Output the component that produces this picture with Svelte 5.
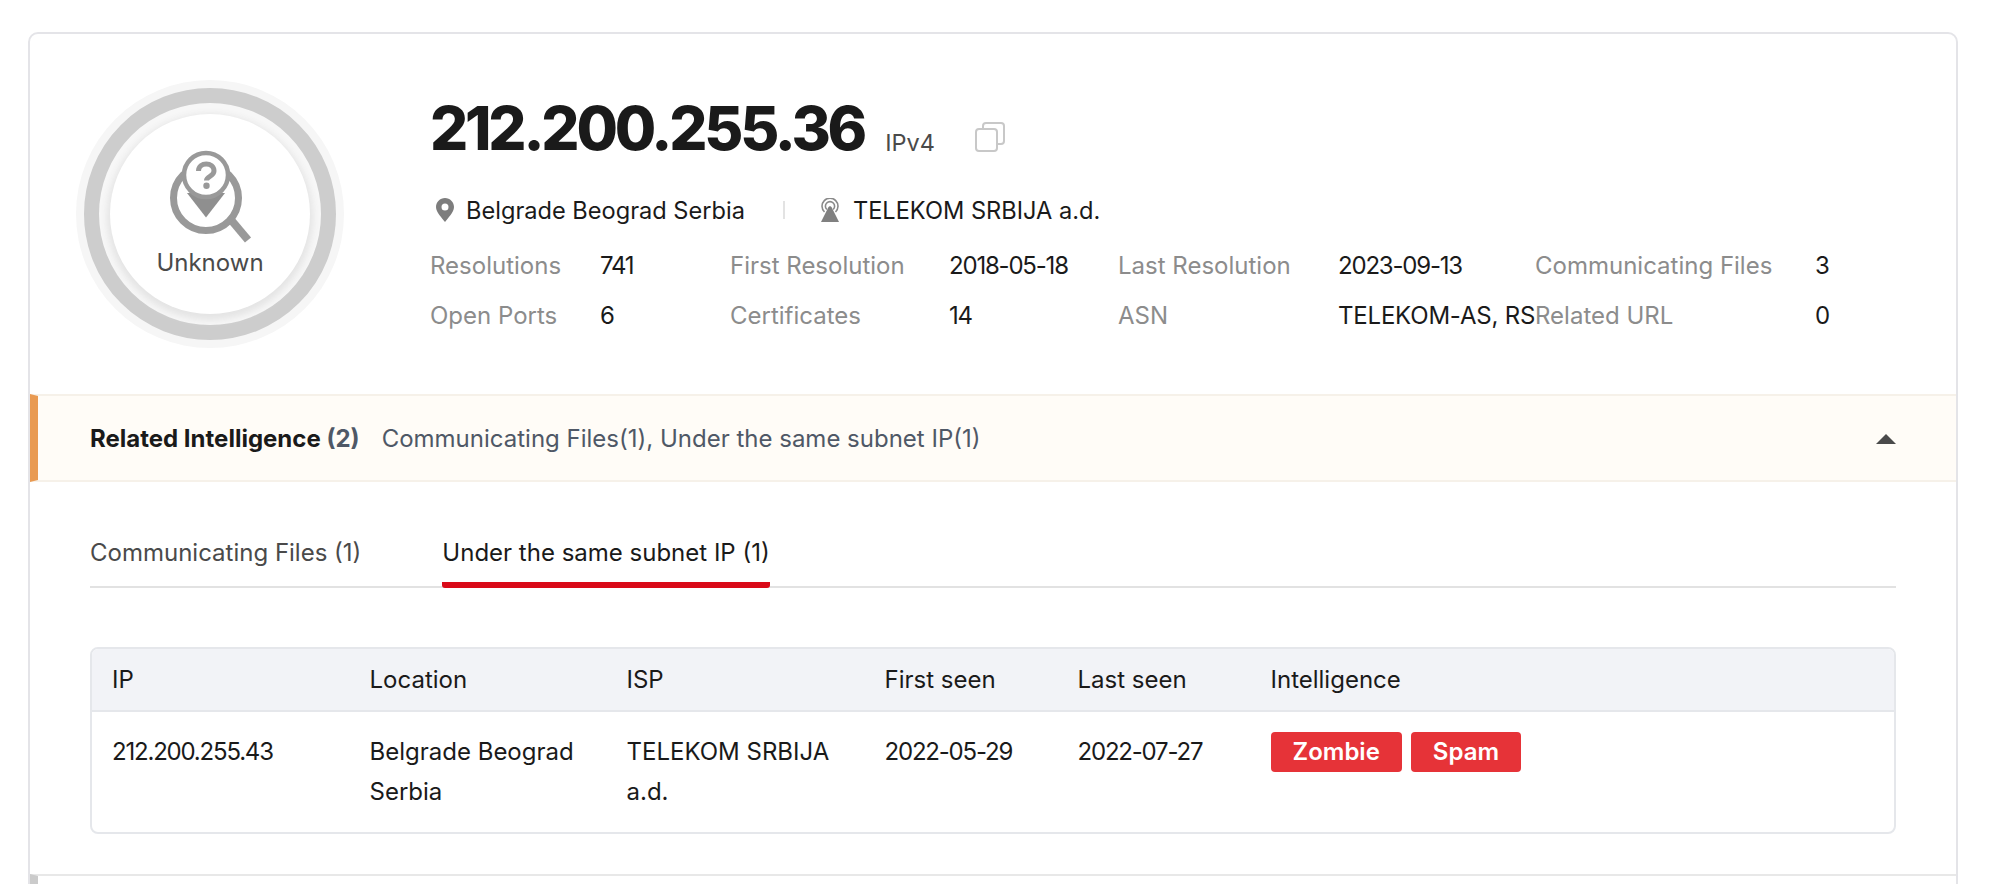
<script lang="ts">
	const stats = [
		['Resolutions', '741', 'First Resolution', '2018-05-18', 'Last Resolution', '2023-09-13', 'Communicating Files', '3'],
		['Open Ports', '6', 'Certificates', '14', 'ASN', 'TELEKOM-AS, RS', 'Related URL', '0']
	];
	const columns = ['IP', 'Location', 'ISP', 'First seen', 'Last seen', 'Intelligence'];
	const row = ['212.200.255.43', 'Belgrade Beograd Serbia', 'TELEKOM SRBIJA a.d.', '2022-05-29', '2022-07-27'];
	const tags = ['Zombie', 'Spam'];

	const isNumeric = (value: string) => /^[\d.-]+$/.test(value);
</script>

<svelte:head>
	<title>212.200.255.36</title>
</svelte:head>

<main class="page">
	<section class="card">
		<header class="summary">
			<div class="verdict">
				<div class="ring">
					<div class="ring-inner">
						<svg class="verdict-icon" viewBox="0 0 90 100" width="90" height="100" aria-hidden="true">
							<circle cx="37" cy="50" r="32.5" fill="#fff" stroke="#999" stroke-width="7" />
							<line x1="63" y1="73" x2="79" y2="92" stroke="#999" stroke-width="8" />
							<path d="M18 45 L37 69.5 L56 45 Z" fill="#8f8f8f" />
							<circle cx="37" cy="27" r="22" fill="#fff" stroke="#999" stroke-width="4.5" />
							<path d="M29.5 23 C29.5 13.5 45 13.5 45 23 C45 28.5 37.5 28 37.5 32.5" fill="none" stroke="#999" stroke-width="5" />
							<circle cx="37.5" cy="37.8" r="3.2" fill="#999" />
						</svg>
						<span class="verdict-label">Unknown</span>
					</div>
				</div>
			</div>

			<div class="details">
				<div class="title-row">
					<h1>212.200.255.36</h1>
					<span class="ip-type">IPv4</span>
					<svg class="copy" viewBox="0 0 30 30" width="30" height="30" aria-hidden="true">
						<rect x="1" y="7" width="21" height="22" rx="3" fill="none" stroke="#c8c8c8" stroke-width="2" />
						<path d="M8 7 V4 A3 3 0 0 1 11 1 H26 A3 3 0 0 1 29 4 V19 A3 3 0 0 1 26 22 H22" fill="none" stroke="#c8c8c8" stroke-width="2" />
					</svg>
				</div>

				<div class="place-row">
					<span class="place">
						<svg viewBox="0 0 18 24" width="18" height="24" aria-hidden="true">
							<path fill-rule="evenodd" d="M9 0 C14 0 18 4 18 9 C18 14 12 20 9 24 C6 20 0 14 0 9 C0 4 4 0 9 0 Z M9 5.5 A3.5 3.5 0 1 0 9 12.5 A3.5 3.5 0 1 0 9 5.5 Z" fill="#7d7d7d" />
						</svg>
						Belgrade Beograd Serbia
					</span>
					<span class="divider"></span>
					<span class="place isp">
						<svg viewBox="0 0 22 24" width="22" height="24" aria-hidden="true">
							<path d="M5.5 14 A8 8 0 1 1 16.5 14" fill="none" stroke="#8a8a8a" stroke-width="1.6" />
							<path d="M7.8 11.5 A4.6 4.6 0 1 1 14.2 11.5" fill="none" stroke="#8a8a8a" stroke-width="1.6" />
							<path d="M11 8 L12.5 9 L20 24 H2 L9.5 9 Z" fill="#808080" />
						</svg>
						TELEKOM SRBIJA a.d.
					</span>
				</div>

				<div class="stats">
					{#each stats as line}
						{#each line as cell, i}
							<span class={i % 2 === 0 ? 'stat-label' : 'stat-value'} class:num={isNumeric(cell)}>{cell}</span>
						{/each}
					{/each}
				</div>
			</div>
		</header>

		<div class="banner">
			<strong>Related Intelligence <em>(2)</em></strong>
			<span class="banner-sub">Communicating Files(1), Under the same subnet IP(1)</span>
			<span class="caret"></span>
		</div>

		<div class="related">
			<nav class="tabs">
				<span class="tab">Communicating Files (1)</span>
				<span class="tab active">Under the same subnet IP (1)</span>
			</nav>

			<div class="table">
				<div class="thead">
					{#each columns as col}
						<span class="cell">{col}</span>
					{/each}
				</div>
				<div class="tbody">
					{#each row as value}
						<span class="cell" class:num={isNumeric(value)}>{value}</span>
					{/each}
					<span class="cell tags">
						{#each tags as tag}
							<span class="tag">{tag}</span>
						{/each}
					</span>
				</div>
			</div>
		</div>

		<div class="next-section"></div>
	</section>
</main>

<style>
	:global(body) {
		background: #fff;
		overflow: hidden;
	}

	.page {
		height: 884px;
		padding: 32px 42px 0 28px;
		box-sizing: border-box;
		overflow: hidden;
		font-family: Inter, 'Liberation Sans', sans-serif;
		font-size: 24px;
		color: #1a1a1a;
	}

	.card {
		border: 2px solid #e4e4e8;
		border-radius: 10px;
		background: #fff;
	}

	.summary {
		display: flex;
		height: 360px;
		padding: 46px 0 0 46px;
		box-sizing: border-box;
	}

	.verdict {
		width: 354px;
		flex: none;
	}

	.ring {
		width: 222px;
		height: 222px;
		border-radius: 50%;
		border: 15px solid #cdcdcd;
		box-shadow: 0 0 0 8px #f6f6f6;
		background: #f7f7f7;
		display: flex;
		align-items: center;
		justify-content: center;
		margin: 8px 0 0 8px;
	}

	.ring-inner {
		width: 200px;
		height: 200px;
		border-radius: 50%;
		background: #fff;
		box-shadow: 0 3px 7px 3px #e4e4e4;
		display: flex;
		flex-direction: column;
		align-items: center;
		flex: none;
	}

	.verdict-icon {
		margin: 34px 0 0 8px;
		flex: none;
	}

	.verdict-label {
		margin-top: 1px;
		line-height: 28px;
		color: #4a4a4a;
	}

	.details {
		flex: 1;
		min-width: 0;
	}

	.title-row {
		display: flex;
		align-items: center;
		height: 78px;
		margin-top: 9px;
	}

	h1 {
		margin: 0;
		font-size: 60px;
		font-weight: 800;
		letter-spacing: -3.2px;
		line-height: 78px;
		color: #1a1a1a;
	}

	.ip-type {
		margin: 28px 0 0 21px;
		font-size: 23.5px;
		color: #4a4a4a;
	}

	.copy {
		margin: 18px 0 0 40px;
	}

	.place-row {
		display: flex;
		align-items: center;
		height: 30px;
		margin: 28px 0 0 6px;
		font-size: 23.6px;
	}

	.place {
		display: flex;
		align-items: center;
		gap: 12px;
		white-space: nowrap;
	}

	.divider {
		width: 2px;
		height: 18px;
		background: #e3e3e3;
		margin: 0 34px 0 38px;
	}

	.stats {
		display: grid;
		grid-template-columns: 170px 130px 219px 169px 220px 197px 280px 60px;
		grid-auto-rows: 50.5px;
		align-items: center;
		margin-top: 15px;
		white-space: nowrap;
	}

	.stat-label {
		color: #8c8c8c;
	}

	.stat-value {
		letter-spacing: -0.2px;
	}

	.stat-value.num,
	.num {
		letter-spacing: -1.2px;
	}

	.banner {
		display: flex;
		align-items: center;
		height: 88px;
		box-sizing: border-box;
		padding: 0 60px 0 52px;
		background: #fffcf7;
		border-top: 2px solid #f6f1e9;
		border-bottom: 2px solid #f6f1e9;
		border-left: 8px solid #e99a52;
	}

	.banner strong {
		font-weight: 700;
		white-space: nowrap;
	}

	.banner em {
		font-style: normal;
		color: #4f5866;
	}

	.banner-sub {
		margin-left: 22px;
		color: #4f5866;
	}

	.caret {
		margin: 1px 0 0 auto;
		width: 0;
		height: 0;
		border-left: 10px solid transparent;
		border-right: 10px solid transparent;
		border-bottom: 10px solid #4a4a4a;
	}

	.related {
		padding: 0 60px;
		height: 392px;
		box-sizing: border-box;
	}

	.tabs {
		display: flex;
		gap: 81px;
		height: 106px;
		box-sizing: border-box;
		border-bottom: 2px solid #e2e2e2;
		align-items: flex-end;
	}

	.tab {
		height: 49px;
		line-height: 28px;
		color: #4a4a4a;
		white-space: nowrap;
		margin-bottom: -2px;
		box-sizing: border-box;
	}

	.tab.active {
		color: #1a1a1a;
		border-bottom: 6px solid #d90a18;
		border-radius: 3px;
	}

	.table {
		margin-top: 59px;
		border: 2px solid #e5e7eb;
		border-radius: 8px;
		overflow: hidden;
	}

	.thead,
	.tbody {
		display: grid;
		grid-template-columns: 257.5px 257px 258px 193px 193px 1fr;
	}

	.thead {
		height: 61px;
		align-items: center;
		background: #f2f3f7;
		border-bottom: 2px solid #e5e7eb;
	}

	.tbody {
		height: 120px;
		padding-top: 20px;
		box-sizing: border-box;
		line-height: 40px;
	}

	.cell {
		padding: 0 20px;
	}

	.tags {
		display: flex;
		gap: 9px;
		align-items: flex-start;
	}

	.tag {
		display: block;
		height: 40px;
		line-height: 40px;
		padding: 0 22px;
		border-radius: 4px;
		background: #e63338;
		color: #fff;
		font-weight: 600;
	}

	.next-section {
		height: 60px;
		border-top: 2px solid #e8e8e8;
		border-left: 8px solid #cbcbcb;
	}
</style>
